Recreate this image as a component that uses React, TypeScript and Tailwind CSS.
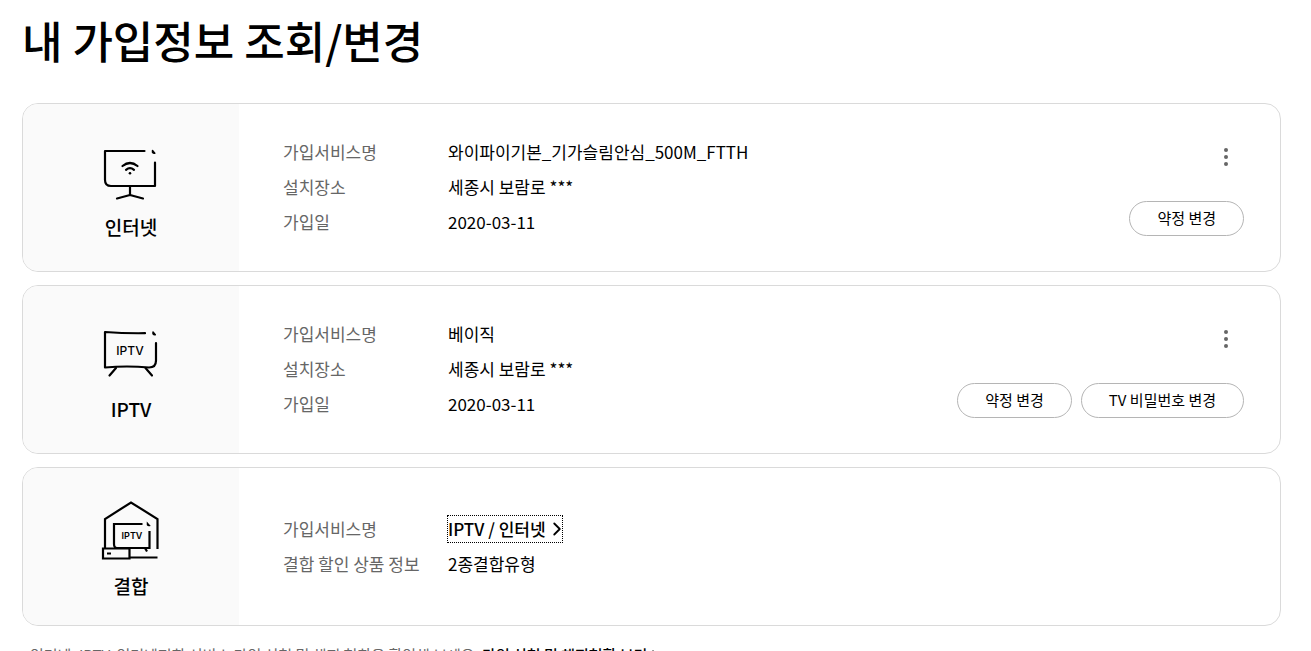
import type { ReactNode } from "react";
import { ChevronRight } from "lucide-react";

type ServiceRow = {
    label: string;
    value: string;
    link?: boolean;
};

type Service = {
    name: string;
    icon: ReactNode;
    rows: ServiceRow[];
    actions: string[];
    short?: boolean;
};

const iconProps = {
    viewBox: "0 0 66 66",
    fill: "none",
    stroke: "currentColor",
    strokeWidth: 2.2,
    strokeLinecap: "round" as const,
    strokeLinejoin: "round" as const,
    className: "size-[66px] text-black",
    "aria-hidden": true,
};

function InternetIcon() {
    return (
        <svg {...iconProps}>
            <path d="M46.500 16H7v29q0 6 6 6h44V27.500" />
            <path
                d="M54.500 15.500v1.800q.8 1.200 2.300 1z"
                fill="currentColor"
                strokeWidth="1.500"
            />
            <path d="M32 51v9M19 63.500l13-3.500 13 3.500" />
            <path d="M24.500 31q7.500-6 15 0M28 34.800q4-3.400 8 0" />
            <circle cx="32" cy="38.300" r="1.300" fill="currentColor" stroke="none" />
        </svg>
    );
}

function IptvIcon() {
    return (
        <svg {...iconProps}>
            <path d="M47 16.200Q27 16.500 7 15v35.500q22-2 44 0 7 0 7-7V26" />
            <path
                d="M55 15v1.800q.8 1.200 2.300 1z"
                fill="currentColor"
                strokeWidth="1.500"
            />
            <path d="M18 51l-6.500 7.500M47.500 51l6.500 7.500" />
            <text
                x="32"
                y="38"
                textAnchor="middle"
                fill="currentColor"
                stroke="none"
                className="font-['Inter',sans-serif] text-[12px] font-medium"
            >
                IPTV
            </text>
        </svg>
    );
}

function BundleIcon() {
    return (
        <svg {...iconProps} strokeLinecap="butt" strokeLinejoin="miter">
            <path d="M7 54V25L33 8.500 59.500 25v30" />
            <path d="M44.500 30H16v20q0 4 3 4h32.500V37" />
            <path
                d="M49.500 29.500v1.300q.6.900 1.800.7z"
                fill="currentColor"
                strokeWidth="1.500"
            />
            <path d="M47 54l2 3.500" />
            <path d="M5 54.500h26.500v10H5zM31.500 63.500h28M9 59.500h4" />
            <text
                x="34"
                y="45"
                textAnchor="middle"
                fill="currentColor"
                stroke="none"
                className="font-['Inter',sans-serif] text-[9px] font-semibold"
            >
                IPTV
            </text>
        </svg>
    );
}

const services: Service[] = [
    {
        name: "인터넷",
        icon: <InternetIcon />,
        rows: [
            { label: "가입서비스명", value: "와이파이기본_기가슬림안심_500M_FTTH" },
            { label: "설치장소", value: "세종시 보람로 ***" },
            { label: "가입일", value: "2020-03-11" },
        ],
        actions: ["약정 변경"],
    },
    {
        name: "IPTV",
        icon: <IptvIcon />,
        rows: [
            { label: "가입서비스명", value: "베이직" },
            { label: "설치장소", value: "세종시 보람로 ***" },
            { label: "가입일", value: "2020-03-11" },
        ],
        actions: ["약정 변경", "TV 비밀번호 변경"],
    },
    {
        name: "결합",
        icon: <BundleIcon />,
        rows: [
            { label: "가입서비스명", value: "IPTV / 인터넷", link: true },
            { label: "결합 할인 상품 정보", value: "2종결합유형" },
        ],
        actions: [],
        short: true,
    },
];

function ServiceCard({ service }: { service: Service }) {
    return (
        <article
            className={`flex overflow-hidden rounded-2xl border border-[#dadada] bg-white ${
                service.short ? "min-h-[159px]" : "min-h-[169px]"
            }`}
        >
            <div className="flex w-[216px] shrink-0 flex-col items-center justify-center gap-3 bg-[#fafafa]">
                {service.icon}
                <h2 className="text-[19px] leading-7 font-medium">
                    {service.name}
                </h2>
            </div>

            <dl className="flex min-w-0 flex-1 flex-col justify-center pb-0.5 pl-11 text-[17px] leading-[35px]">
                {service.rows.map((row) => (
                    <div key={row.label} className="flex">
                        <dt className="w-[165px] shrink-0 text-[#666]">
                            {row.label}
                        </dt>
                        <dd>
                            {row.link ? (
                                <a
                                    href="#bundle"
                                    className="inline-flex items-center font-medium leading-[26px] outline outline-dotted outline-black"
                                >
                                    {row.value}
                                    <ChevronRight
                                        className="-mr-1.5 size-[22px]"
                                        strokeWidth={2}
                                    />
                                </a>
                            ) : (
                                row.value
                            )}
                        </dd>
                    </div>
                ))}
            </dl>

            {service.actions.length > 0 ? (
                <div className="flex shrink-0 flex-col items-end justify-between py-[35px] pr-9">
                    <button
                        type="button"
                        aria-label="더보기"
                        className="flex h-[35px] w-9 flex-col items-center justify-center gap-[3px]"
                    >
                        <span className="size-1 rounded-full bg-[#666]" />
                        <span className="size-1 rounded-full bg-[#666]" />
                        <span className="size-1 rounded-full bg-[#666]" />
                    </button>
                    <div className="mt-5 flex gap-[9px]">
                        {service.actions.map((action) => (
                            <button
                                key={action}
                                type="button"
                                className="h-[35px] rounded-full border border-[#b5b5b5] px-[27px] text-[15px]"
                            >
                                {action}
                            </button>
                        ))}
                    </div>
                </div>
            ) : null}
        </article>
    );
}

export default function App() {
    return (
        <main className="h-screen overflow-hidden bg-white pr-[30px] pl-[22px] font-['Noto_Sans_CJK_KR',sans-serif] text-black">
            <h1 className="pt-[9px] pb-[31px] text-[44px] leading-[63px] font-medium">
                내 가입정보 조회/변경
            </h1>

            <section className="flex flex-col gap-[13px]">
                {services.map((service) => (
                    <ServiceCard key={service.name} service={service} />
                ))}
            </section>

            <p className="mt-[17px] pl-2 text-[15px] leading-6 text-[#666]">
                인터넷, IPTV, 인터넷전화 서비스 가입 신청 및 해지 현황을 확인해
                보세요.{" "}
                <a
                    href="#history"
                    className="inline-flex items-center font-medium text-black"
                >
                    가입 신청 및 해지현황 보기
                    <ChevronRight className="size-4" />
                </a>
            </p>
        </main>
    );
}
